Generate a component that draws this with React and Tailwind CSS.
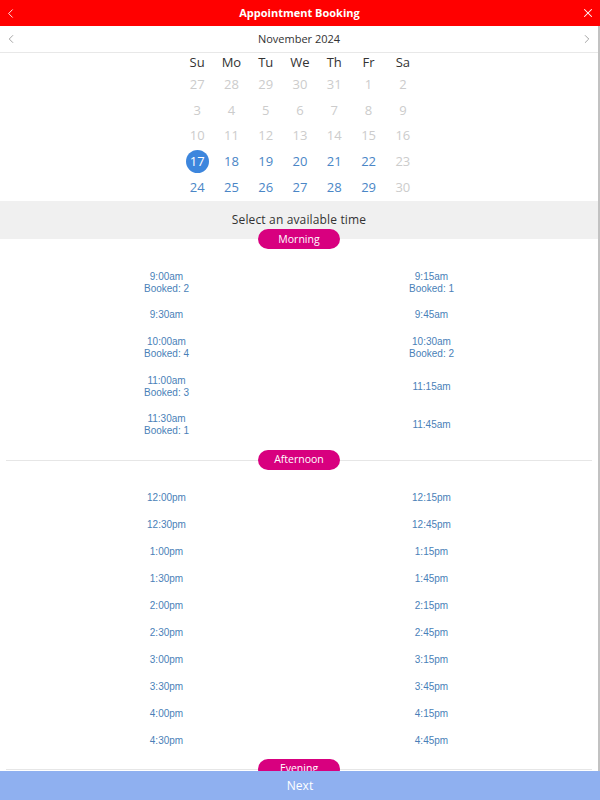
import { ChevronLeft, ChevronRight, X } from "lucide-react";

const weekdays = ["Su", "Mo", "Tu", "We", "Th", "Fr", "Sa"];

// [day, state] : 0 = disabled, 1 = available, 2 = selected
const weeks = [
  [[27, 0], [28, 0], [29, 0], [30, 0], [31, 0], [1, 0], [2, 0]],
  [[3, 0], [4, 0], [5, 0], [6, 0], [7, 0], [8, 0], [9, 0]],
  [[10, 0], [11, 0], [12, 0], [13, 0], [14, 0], [15, 0], [16, 0]],
  [[17, 2], [18, 1], [19, 1], [20, 1], [21, 1], [22, 1], [23, 0]],
  [[24, 1], [25, 1], [26, 1], [27, 1], [28, 1], [29, 1], [30, 0]],
];

const morning = [
  { time: "9:00am", booked: 2 },
  { time: "9:15am", booked: 1 },
  { time: "9:30am" },
  { time: "9:45am" },
  { time: "10:00am", booked: 4 },
  { time: "10:30am", booked: 2 },
  { time: "11:00am", booked: 3 },
  { time: "11:15am" },
  { time: "11:30am", booked: 1 },
  { time: "11:45am" },
];

const afternoon = [
  "12:00pm", "12:15pm", "12:30pm", "12:45pm", "1:00pm", "1:15pm",
  "1:30pm", "1:45pm", "2:00pm", "2:15pm", "2:30pm", "2:45pm",
  "3:00pm", "3:15pm", "3:30pm", "3:45pm", "4:00pm", "4:15pm",
  "4:30pm", "4:45pm",
].map((time) => ({ time }));

const sans = { fontFamily: '"Open Sans", "Noto Sans", sans-serif' };

function Pill({ label, line = true, className = "" }) {
  return (
    <div className={`relative h-[20px] flex items-center justify-center ${className}`}>
      {line && <div className="absolute left-[6px] right-[6px] top-[10px] border-t border-[#e6e6e6]" />}
      <div
        className="relative w-[82px] h-[20px] rounded-full bg-[#d8007f] text-white text-[10.5px] flex items-center justify-center"
        style={sans}
      >
        {label}
      </div>
    </div>
  );
}

function Slots({ items }) {
  return (
    <div className="grid grid-cols-2 px-[34px] font-['Liberation_Sans',Arial,sans-serif] text-[10px] leading-[12px] text-[#4a7fb8]">
      {items.map((s) => (
        <div
          key={s.time}
          className="min-h-[27px] py-[7.25px] flex flex-col items-center justify-center text-center"
        >
          <span>{s.time}</span>
          {s.booked && <span>Booked: {s.booked}</span>}
        </div>
      ))}
    </div>
  );
}

export default function App() {
  return (
    <div className="w-[600px] h-[800px] flex flex-col overflow-hidden bg-white" style={sans}>
      <header className="h-[26px] shrink-0 bg-[#ff0000] flex items-center justify-between pl-[3px] pr-[5px] text-white">
        <ChevronLeft size={15} strokeWidth={1.4} />
        <span className="text-[11px] font-bold">Appointment Booking</span>
        <X size={14} strokeWidth={1.8} />
      </header>

      <div className="flex-1 overflow-hidden border-r-2 border-[#c2c2c2]">
        <div className="h-[27px] flex items-center justify-between px-[4px] border-b border-[#e8e8e8] text-[#666]">
          <ChevronLeft size={14} strokeWidth={1} />
          <span className="text-[11px] text-[#333]">November 2024</span>
          <ChevronRight size={14} strokeWidth={1} />
        </div>

        <div className="w-[240px] pb-[1px] ml-[180px]">
          <div className="grid grid-cols-7 h-[19px] items-center text-[13px] text-[#333]">
            {weekdays.map((d) => (
              <div key={d} className="text-center">{d}</div>
            ))}
          </div>
          {weeks.map((w, i) => (
            <div key={i} className="grid grid-cols-7 h-[25.7px] items-center text-[13px]">
              {w.map(([d, s]) => (
                <div key={d} className="flex justify-center">
                  {s === 2 ? (
                    <span className="w-[23px] h-[23px] rounded-full bg-[#3d86dd] text-white flex items-center justify-center">
                      {d}
                    </span>
                  ) : (
                    <span className={s === 1 ? "text-[#4a86c6]" : "text-[#cccccc]"}>{d}</span>
                  )}
                </div>
              ))}
            </div>
          ))}
        </div>

        <div className="h-[38px] bg-[#f0f0f0] flex items-center justify-center text-[12px] tracking-[0.15px] text-[#333]">
          Select an available time
        </div>
        <Pill label="Morning" line={false} className="-mt-[10px] mb-[14px]" />
        <Slots items={morning} />

        <Pill label="Afternoon" className="mt-[5.5px] mb-[14.5px]" />
        <Slots items={afternoon} />

        <Pill label="Evening" className="mt-[4.5px]" />
      </div>

      <button className="h-[29px] shrink-0 bg-[#8fb0f0] text-white text-[12px]">Next</button>
    </div>
  );
}
